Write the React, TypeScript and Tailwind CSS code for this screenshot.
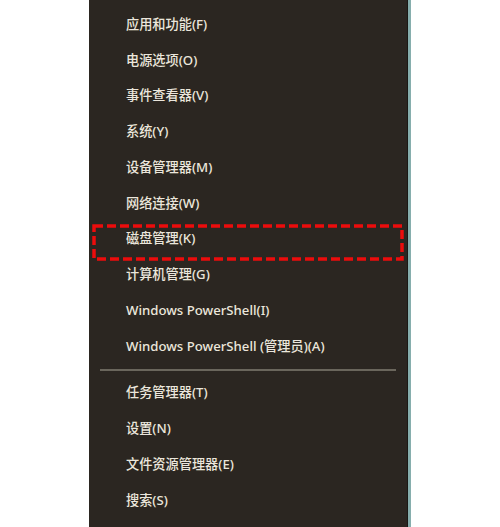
const items: string[][] = [
  ['应用和功能(F)', '电源选项(O)', '事件查看器(V)', '系统(Y)', '设备管理器(M)', '网络连接(W)', '磁盘管理(K)', '计算机管理(G)', 'Windows PowerShell(I)', 'Windows PowerShell (管理员)(A)'],
  ['任务管理器(T)', '设置(N)', '文件资源管理器(E)', '搜索(S)'],
]

function Row({ label, marked }: { label: string; marked?: boolean }) {
  return (
    <div className="relative h-[35.75px] flex items-center pl-[37px] text-[13.2px] font-medium text-[#ebe6dc] whitespace-nowrap">
      {label}
      {marked && (
        <svg className="absolute left-[3px] top-[2px]" width="312" height="37" viewBox="0 0 312 37">
          <rect x="2" y="2" width="308" height="33" fill="none" stroke="#ec0c0c" strokeWidth="3.5" strokeDasharray="9 4" />
        </svg>
      )}
    </div>
  )
}

export default function App() {
  return (
    <div className="w-[500px] h-[527px] bg-white flex overflow-hidden" style={{ fontFamily: '"Noto Sans", "Noto Sans CJK SC", sans-serif' }}>
      <div className="ml-[89px] w-[318px] h-full bg-[#2b2621] pt-[7px]">
        {items[0].map(t => <Row key={t} label={t} marked={t.startsWith('磁盘')} />)}
        <div className="mx-[11px] mt-[4px] mb-[5px] h-[2px] bg-[#6a665c]" />
        {items[1].map(t => <Row key={t} label={t} />)}
      </div>
      <div className="w-[1px] h-full bg-[#1a1815]" />
      <div className="w-[3px] h-full bg-[#86aead]" />
    </div>
  )
}
